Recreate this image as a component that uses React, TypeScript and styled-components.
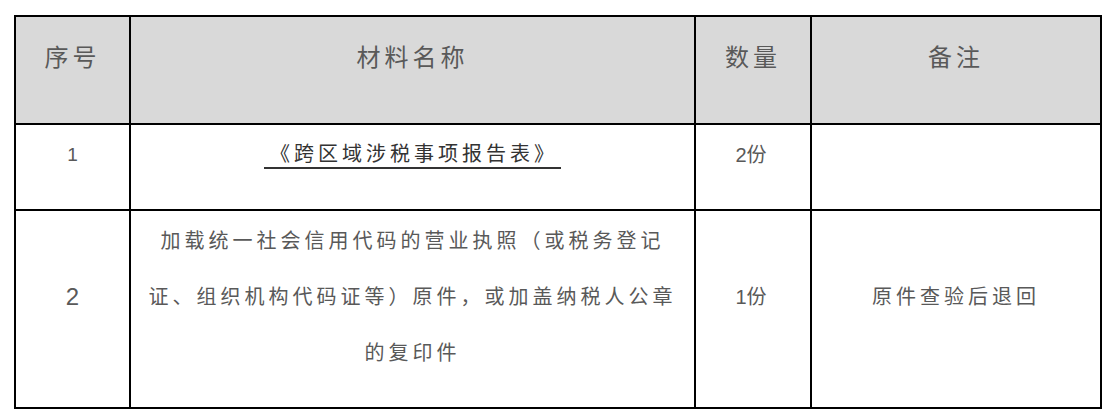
import React from 'react';
import styled, { createGlobalStyle } from 'styled-components';

const GlobalStyle = createGlobalStyle`
  body {
    margin: 0;
    background: #ffffff;
    font-family: 'Liberation Sans', 'Noto Sans CJK SC', sans-serif;
  }
`;

const Page = styled.div`
  padding: 15px 0 0 14px;
`;

const Grid = styled.div`
  display: grid;
  grid-template-columns: 113px 563px 114px 288px;
  grid-template-rows: 106px 84px 196px;
  gap: 2px;
  padding: 2px;
  width: fit-content;
  background: #000000;
`;

const Cell = styled.div<{ $head?: boolean; $size?: number }>`
  display: flex;
  align-items: center;
  justify-content: center;
  padding: 0 10px 24px;
  background: ${(p) => (p.$head ? '#d9d9d9' : '#ffffff')};
  color: #595959;
  font-size: ${(p) => p.$size ?? 20}px;
  letter-spacing: 4px;
  line-height: 56px;
  text-align: center;
`;

// digits sit tight against the next glyph
const Num = styled.span`
  letter-spacing: 0;
`;

const DocLink = styled.span`
  display: inline-block;
  padding: 0 3px 0 6px;
  color: #333333;
  line-height: 26px;
  border-bottom: 2px solid #333333;
`;

function App() {
  return (
    <Page>
      <GlobalStyle />
      <Grid>
        <Cell $head $size={24}>序号</Cell>
        <Cell $head $size={24}>材料名称</Cell>
        <Cell $head $size={24}>数量</Cell>
        <Cell $head $size={24}>备注</Cell>

        <Cell $size={19}><Num>1</Num></Cell>
        <Cell>
          <DocLink>《跨区域涉税事项报告表》</DocLink>
        </Cell>
        <Cell><Num>2</Num>份</Cell>
        <Cell />

        <Cell $size={24}><Num>2</Num></Cell>
        <Cell>
          加载统一社会信用代码的营业执照（或税务登记证、组织机构代码证等）原件，或加盖纳税人公章的复印件
        </Cell>
        <Cell><Num>1</Num>份</Cell>
        <Cell>原件查验后退回</Cell>
      </Grid>
    </Page>
  );
}

export default App;
